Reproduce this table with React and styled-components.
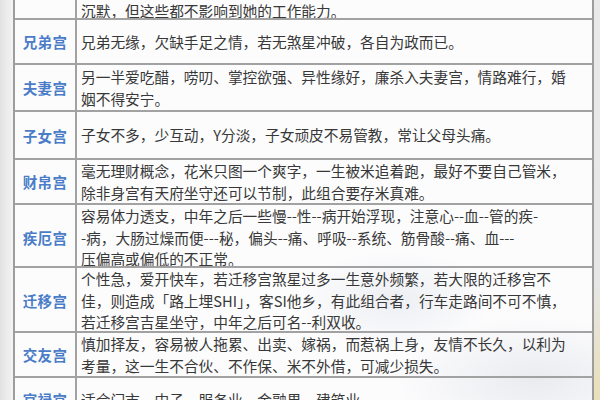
import React from 'react'
import styled, { createGlobalStyle } from 'styled-components'

const GlobalStyle = createGlobalStyle`
  html, body {
    margin: 0;
    padding: 0;
    background: #ececec;
  }
  body {
    font-family: "Noto Sans CJK SC", "Noto Sans", sans-serif;
  }
`

const palaces = [
  { name: '', height: 20, lines: ['沉默，但这些都不影响到她的工作能力。'] },
  { name: '兄弟宫', height: 45, lines: ['兄弟无缘，欠缺手足之情，若无煞星冲破，各自为政而已。'] },
  {
    name: '夫妻宫',
    height: 47,
    lines: ['另一半爱吃醋，唠叨、掌控欲强、异性缘好，廉杀入夫妻宫，情路难行，婚', '姻不得安宁。']
  },
  { name: '子女宫', height: 48, lines: ['子女不多，少互动，Y分淡，子女顽皮不易管教，常让父母头痛。'] },
  {
    name: '财帛宫',
    height: 45,
    lines: ['毫无理财概念，花米只图一个爽字，一生被米追着跑，最好不要自己管米，', '除非身宫有天府坐守还可以节制，此组合要存米真难。']
  },
  {
    name: '疾厄宫',
    height: 63,
    lines: [
      '容易体力透支，中年之后一些慢--性--病开始浮现，注意心--血--管的疾-',
      '-病，大肠过燥而便---秘，偏头--痛、呼吸--系统、筋骨酸--痛、血---',
      '压偏高或偏低的不正常。'
    ]
  },
  {
    name: '迁移宫',
    height: 65,
    lines: [
      '个性急，爱开快车，若迁移宫煞星过多一生意外频繁，若大限的迁移宫不',
      '佳，则造成「路上埋SHI」，客SI他乡，有此组合者，行车走路间不可不慎，',
      '若迁移宫吉星坐守，中年之后可名--利双收。'
    ]
  },
  {
    name: '交友宫',
    height: 45,
    lines: ['慎加择友，容易被人拖累、出卖、嫁祸，而惹祸上身，友情不长久，以利为', '考量，这一生不合伙、不作保、米不外借，可减少损失。']
  },
  { name: '官禄宫', height: 45, lines: ['适合门市、中子、服务业、金融界、建筑业。'] }
]

export default function App() {
  return (
    <>
      <GlobalStyle />
      <Page>
        <SideStrip />
        <Table>
          {palaces.map((p, i) => (
            <Row key={i} $height={p.height} $first={i === 0}>
              <Label>{p.name}</Label>
              <Content $first={i === 0}>
                {p.lines.map((line, j) => (
                  <Line key={j}>{line}</Line>
                ))}
              </Content>
            </Row>
          ))}
        </Table>
        <EdgeStrip />
      </Page>
    </>
  )
}

const Page = styled.div`
  width: 600px;
  height: 400px;
  overflow: hidden;
  display: flex;
  background: #ececec;
`

const SideStrip = styled.div`
  width: 13px;
  flex-shrink: 0;
  background: linear-gradient(90deg, #e2e2e2 0%, #ededed 60%, #f3f3f3 100%);
`

const EdgeStrip = styled.div`
  flex: 1;
  background: linear-gradient(180deg, #e9e9e9 0%, #e6e6e6 70%, #e9dfb8 100%);
`

const Table = styled.div`
  width: 577px;
  flex-shrink: 0;
  display: flex;
  flex-direction: column;
  border-left: 2px solid #9d9d9d;
  border-right: 2px solid #9d9d9d;
  background:
    radial-gradient(ellipse 140px 70px at 380px 300px, rgba(225, 228, 235, 0.55), transparent 70%),
    radial-gradient(ellipse 200px 90px at 520px 380px, rgba(222, 224, 230, 0.6), transparent 70%),
    #fcfcfd;
`

const Row = styled.div`
  display: grid;
  grid-template-columns: 62px 1fr;
  height: ${(p) => p.$height}px;
  flex-shrink: 0;
  border-bottom: 2px solid #a2a2a2;
  box-sizing: border-box;
  overflow: hidden;
`

const Label = styled.div`
  display: flex;
  align-items: center;
  justify-content: center;
  border-right: 2px solid #a2a2a2;
  color: #4a7cc8;
  font-size: 14.5px;
  font-weight: 700;
  letter-spacing: 0.3px;
`

const Content = styled.div`
  display: flex;
  flex-direction: column;
  justify-content: ${(p) => (p.$first ? 'flex-end' : 'center')};
  padding: 0 0 0 4px;
  color: #383838;
  font-size: 14.7px;
  line-height: 21.5px;
`

const Line = styled.div`
  white-space: nowrap;
`
